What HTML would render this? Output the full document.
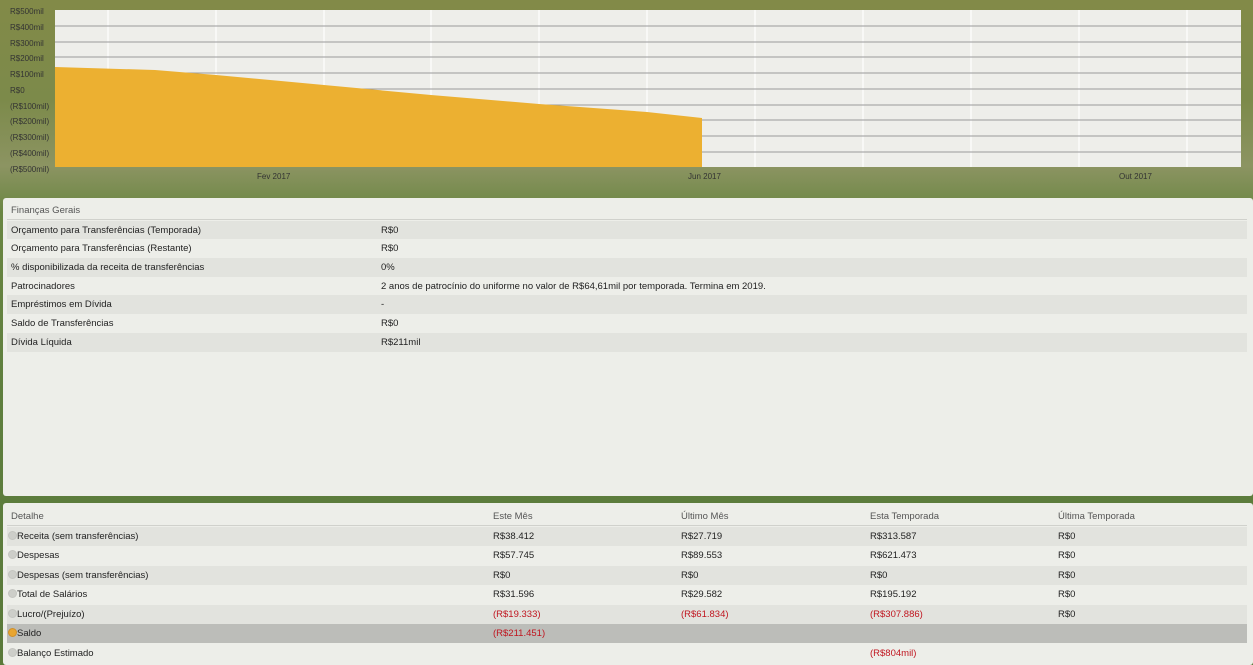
<!DOCTYPE html><html><head><meta charset="utf-8"><style>
*{margin:0;padding:0;box-sizing:border-box}
body{width:1253px;height:665px;overflow:hidden;position:relative;font-family:"Liberation Sans",sans-serif;font-size:9.5px;color:#222;
background:linear-gradient(180deg,#828a48 0%,#7c8a4a 15%,#8c9462 25%,#6a8642 32%,#5e7e3e 60%,#5a7a3a 100%)}
.yl{position:absolute;left:10px;font-size:8px;color:#333}
.xl{position:absolute;top:172px;font-size:8px;color:#333}
.panel{position:absolute;left:3px;right:0;background:#edeee9;border-radius:3px}
.row{position:absolute;left:4px;right:6px;height:19px;line-height:19px;padding-left:4px}
.d{background:#e2e3de}.l{background:#edeee9}
.hd{color:#555;}
.c{position:absolute;top:0}
.red{color:#c0151f}
.ic{display:inline-block;width:9px;height:9px;border-radius:50%;background:#cdcec9;border:1px solid #c4c5c0;vertical-align:-1px;margin-left:-3px}
</style></head><body>
<svg style="position:absolute;left:0;top:0" width="1253" height="180">
<rect x="55" y="10" width="1186" height="157" fill="#eeeeea"/>
<g stroke="#fff" stroke-width="1.2">
<line x1="108" y1="10" x2="108" y2="167"/><line x1="216" y1="10" x2="216" y2="167"/><line x1="324" y1="10" x2="324" y2="167"/><line x1="431" y1="10" x2="431" y2="167"/><line x1="539" y1="10" x2="539" y2="167"/><line x1="647" y1="10" x2="647" y2="167"/><line x1="755" y1="10" x2="755" y2="167"/><line x1="863" y1="10" x2="863" y2="167"/><line x1="971" y1="10" x2="971" y2="167"/><line x1="1079" y1="10" x2="1079" y2="167"/><line x1="1187" y1="10" x2="1187" y2="167"/></g>
<g stroke="#999" stroke-width="1">
<line x1="55" y1="26" x2="1241" y2="26"/><line x1="55" y1="42" x2="1241" y2="42"/><line x1="55" y1="57" x2="1241" y2="57"/><line x1="55" y1="73" x2="1241" y2="73"/><line x1="55" y1="89" x2="1241" y2="89"/><line x1="55" y1="105" x2="1241" y2="105"/><line x1="55" y1="120" x2="1241" y2="120"/><line x1="55" y1="136" x2="1241" y2="136"/><line x1="55" y1="152" x2="1241" y2="152"/></g>
<polygon points="55,67 155,70 216,75 324,85 431,95 539,104 647,112 702,118 702,167 55,167" fill="#ecb031"/>
</svg>
<div class="yl" style="top:7px">R$500mil</div><div class="yl" style="top:23px">R$400mil</div><div class="yl" style="top:39px">R$300mil</div><div class="yl" style="top:54px">R$200mil</div><div class="yl" style="top:70px">R$100mil</div><div class="yl" style="top:86px">R$0</div><div class="yl" style="top:102px">(R$100mil)</div><div class="yl" style="top:117px">(R$200mil)</div><div class="yl" style="top:133px">(R$300mil)</div><div class="yl" style="top:149px">(R$400mil)</div><div class="yl" style="top:165px">(R$500mil)</div>
<div class="xl" style="left:257px">Fev 2017</div><div class="xl" style="left:688px">Jun 2017</div><div class="xl" style="left:1119px">Out 2017</div>

<div class="panel" style="top:198px;height:298px">
<div class="row hd" style="top:3px;border-bottom:1px solid #d0d1cc">Finanças Gerais</div>
<div class="row d" style="top:23px">Orçamento para Transferências (Temporada)<span class="c" style="left:374px">R$0</span></div>
<div class="row l" style="top:41px">Orçamento para Transferências (Restante)<span class="c" style="left:374px">R$0</span></div>
<div class="row d" style="top:60px">% disponibilizada da receita de transferências<span class="c" style="left:374px">0%</span></div>
<div class="row l" style="top:79px">Patrocinadores<span class="c" style="left:374px">2 anos de patrocínio do uniforme no valor de R$64,61mil por temporada. Termina em 2019.</span></div>
<div class="row d" style="top:97px">Empréstimos em Dívida<span class="c" style="left:374px">-</span></div>
<div class="row l" style="top:116px">Saldo de Transferências<span class="c" style="left:374px">R$0</span></div>
<div class="row d" style="top:135px">Dívida Líquida<span class="c" style="left:374px">R$211mil</span></div>
</div>

<div class="panel" style="top:503px;height:162px">
<div class="row hd" style="top:4px;border-bottom:1px solid #d0d1cc">Detalhe<span class="c" style="left:486px">Este Mês</span><span class="c" style="left:674px">Último Mês</span><span class="c" style="left:863px">Esta Temporada</span><span class="c" style="left:1051px">Última Temporada</span></div>
<div class="row d" style="top:24px"><span class="ic"></span>Receita (sem transferências)<span class="c" style="left:486px">R$38.412</span><span class="c" style="left:674px">R$27.719</span><span class="c" style="left:863px">R$313.587</span><span class="c" style="left:1051px">R$0</span></div>
<div class="row l" style="top:43px"><span class="ic"></span>Despesas<span class="c" style="left:486px">R$57.745</span><span class="c" style="left:674px">R$89.553</span><span class="c" style="left:863px">R$621.473</span><span class="c" style="left:1051px">R$0</span></div>
<div class="row d" style="top:63px"><span class="ic"></span>Despesas (sem transferências)<span class="c" style="left:486px">R$0</span><span class="c" style="left:674px">R$0</span><span class="c" style="left:863px">R$0</span><span class="c" style="left:1051px">R$0</span></div>
<div class="row l" style="top:82px"><span class="ic"></span>Total de Salários<span class="c" style="left:486px">R$31.596</span><span class="c" style="left:674px">R$29.582</span><span class="c" style="left:863px">R$195.192</span><span class="c" style="left:1051px">R$0</span></div>
<div class="row d" style="top:102px"><span class="ic"></span>Lucro/(Prejuízo)<span class="c red" style="left:486px">(R$19.333)</span><span class="c red" style="left:674px">(R$61.834)</span><span class="c red" style="left:863px">(R$307.886)</span><span class="c" style="left:1051px">R$0</span></div>
<div class="row" style="top:121px;background:#bcbdb9;right:6px"><span class="ic" style="background:#e8a530;border-color:#d0902a"></span>Saldo<span class="c red" style="left:486px">(R$211.451)</span></div>
<div class="row l" style="top:141px"><span class="ic"></span>Balanço Estimado<span class="c red" style="left:863px">(R$804mil)</span></div>
</div>
</body></html>
